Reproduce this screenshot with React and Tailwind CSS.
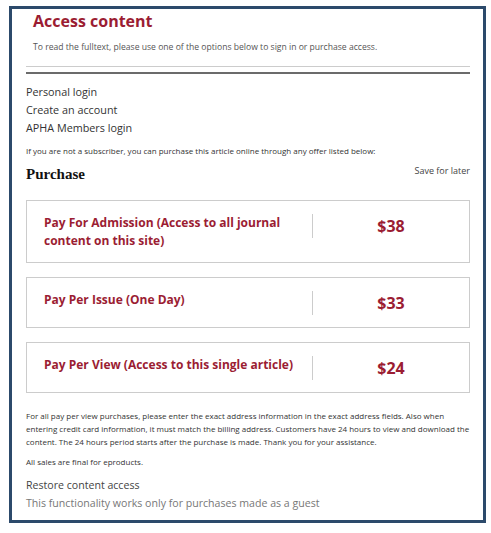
import React from 'react';

const offers = [
    { title: 'Pay For Admission (Access to all journal content on this site)', price: '$38' },
    { title: 'Pay Per Issue (One Day)', price: '$33' },
    { title: 'Pay Per View (Access to this single article)', price: '$24' },
];

export default function App() {
    return (
        <div className="min-h-screen bg-white pt-[6px] pl-[9px]" style={{ fontFamily: '"Open Sans", sans-serif' }}>
            <div className="w-[477px] h-[517px] border-[3px] border-[#2c4a6b] pl-[14px] pr-[13px] box-border">
                {/* Header */}
                <div className="px-[7px]">
                    <h1 className="text-[16px] leading-[24px] font-bold text-[#9b1d33]">Access content</h1>
                    <p className="mt-[8px] text-[8.6px] leading-[12px] text-[#555]">
                        To read the fulltext, please use one of the options below to sign in or purchase access.
                    </p>
                </div>
                <div className="mt-[13px] border-b border-[#cccccc]"></div>
                <div className="mt-[5px] h-[2px] bg-[#6b6b6b]"></div>

                {/* Login links */}
                <div className="mt-[9px] flex flex-col text-[10.8px] leading-[18px] text-[#333]">
                    <a href="#">Personal login</a>
                    <a href="#">Create an account</a>
                    <a href="#">APHA Members login</a>
                </div>

                <p className="mt-[8px] text-[8px] leading-[12px] text-[#333]">
                    If you are not a subscriber, you can purchase this article online through any offer listed below:
                </p>

                <div className="mt-[7px] flex items-start justify-between">
                    <h2 className="text-[15px] leading-[20px] font-bold text-[#111]" style={{ fontFamily: '"Liberation Serif", serif' }}>
                        Purchase
                    </h2>
                    <span className="mt-[1px] text-[9px] leading-[12px] text-[#444]">Save for later</span>
                </div>

                {/* Offers */}
                <div className="mt-[16px] flex flex-col gap-[14px]">
                    {offers.map((o) => (
                        <div key={o.price} className="flex items-start border border-[#cccccc] pt-[13px] pb-[12px]">
                            <div className="flex-1 pl-[17px] pr-[8px] text-[12px] leading-[18px] font-bold text-[#9b1d33]">
                                {o.title}
                            </div>
                            <div className="w-[157px] h-[24px] border-l border-[#cccccc] flex items-center justify-center">
                                <span className="text-[16px] font-bold text-[#9b1d33]">{o.price}</span>
                            </div>
                        </div>
                    ))}
                </div>

                {/* Notes */}
                <p className="mt-[16px] text-[8px] leading-[13px] text-[#333]">
                    For all pay per view purchases, please enter the exact address information in the exact address fields. Also when entering credit card information, it must match the billing address. Customers have 24 hours to view and download the content. The 24 hours period starts after the purchase is made. Thank you for your assistance.
                </p>
                <p className="mt-[7px] text-[8px] leading-[13px] text-[#333]">All sales are final for eproducts.</p>

                <div className="mt-[8px] text-[10.6px] leading-[18px] text-[#444]">Restore content access</div>
                <div className="text-[10.6px] leading-[18px] text-[#777]">This functionality works only for purchases made as a guest</div>
            </div>
        </div>
    );
}
